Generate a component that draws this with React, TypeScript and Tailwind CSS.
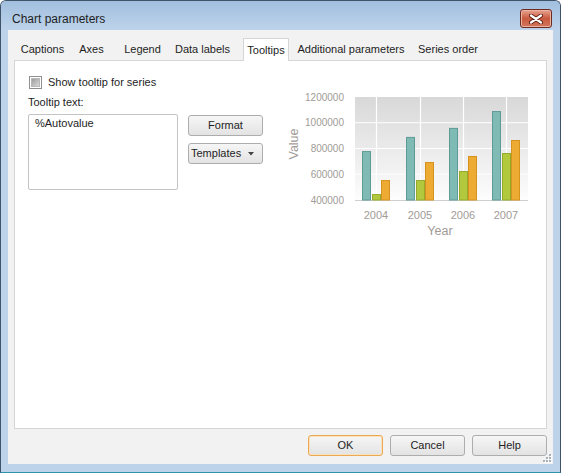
import React from 'react';

// --- chart data (values read off the picture) ---
const years = [
    { year: '2004', c: 96, v: [780000, 446000, 555000] },
    { year: '2005', c: 140, v: [890000, 555000, 695000] },
    { year: '2006', c: 183, v: [960000, 625000, 742000] },
    { year: '2007', c: 226, v: [1091000, 765000, 866000] },
];

const series = [
    { dx: -13.5, fill: '#80bab4', stroke: '#5f9b95' },
    { dx: -3.5, fill: '#b3c93d', stroke: '#93aa2c' },
    { dx: 5.5, fill: '#eeab34', stroke: '#d6921f' },
];

const yTicks = [1200000, 1000000, 800000, 600000, 400000];

const tabs = [
    { label: 'Captions', cls: 'w-[57px]' },
    { label: 'Axes', cls: 'w-[41px]' },
    { label: 'Legend', cls: 'w-[61px]' },
    { label: 'Data labels', cls: 'w-[59px]' },
    { label: 'Tooltips', cls: 'w-[46px] ml-[11px]', active: true },
    { label: 'Additional parameters', cls: 'w-[124px]' },
    { label: 'Series order', cls: 'w-[70px]' },
];

const PLOT_X = 75;
const PLOT_W = 173;
const PLOT_TOP = 21;
const PLOT_BOTTOM = 124;

const yOf = (v: number) => PLOT_BOTTOM - ((v - 400000) / 800000) * (PLOT_BOTTOM - PLOT_TOP);

function Chart() {
    return (
        <svg width="260" height="165" className="ml-[17px] shrink-0">
            <defs>
                <linearGradient id="plotBg" x1="0" y1="0" x2="0" y2="1">
                    <stop offset="0" stopColor="#d8d8d8" />
                    <stop offset="1" stopColor="#fdfdfd" />
                </linearGradient>
            </defs>
            <rect x={PLOT_X} y={PLOT_TOP} width={PLOT_W} height={PLOT_BOTTOM - PLOT_TOP} fill="url(#plotBg)" />
            {[1000000, 800000, 600000].map((v) => (
                <line key={v} x1={PLOT_X} x2={PLOT_X + PLOT_W} y1={yOf(v)} y2={yOf(v)} stroke="#ffffff" strokeWidth="1.2" />
            ))}
            {years.map((y) => (
                <line key={y.year} x1={y.c + 0.5} x2={y.c + 0.5} y1={PLOT_TOP} y2={PLOT_BOTTOM} stroke="#ffffff" strokeWidth="1.2" />
            ))}
            <line x1={PLOT_X} x2={PLOT_X + PLOT_W} y1={PLOT_BOTTOM + 0.5} y2={PLOT_BOTTOM + 0.5} stroke="#cfcfcf" />

            {years.map((y) =>
                series.map((s, i) => {
                    const top = yOf(y.v[i]);
                    return (
                        <rect
                            key={y.year + i}
                            x={y.c + s.dx}
                            y={top + 0.5}
                            width={8}
                            height={PLOT_BOTTOM - top - 0.5}
                            fill={s.fill}
                            stroke={s.stroke}
                            strokeWidth="1"
                        />
                    );
                })
            )}

            <g fontFamily="Liberation Sans, Arial, sans-serif" fill="#a19b97">
                {yTicks.map((v) => (
                    <text key={v} x={64} y={yOf(v) + 3.5} fontSize="10" textAnchor="end">
                        {v}
                    </text>
                ))}
                {years.map((y) => (
                    <text key={y.year} x={y.c} y={143} fontSize="11" textAnchor="middle">
                        {y.year}
                    </text>
                ))}
                <text x={160} y={159} fontSize="12.5" textAnchor="middle">Year</text>
                <text x={18} y={68} fontSize="12.5" textAnchor="middle" transform="rotate(-90 18 68)">Value</text>
            </g>
        </svg>
    );
}

function Button({ children, primary = false, className = '' }: { children: React.ReactNode; primary?: boolean; className?: string }) {
    return (
        <div
            className={
                'h-[21px] rounded-[3px] border bg-linear-to-b from-[#f6f6f6] to-[#e3e3e3] flex items-center text-[11px] leading-[13px] text-[#1e1e1e] ' +
                (primary ? 'border-[#eaa952] shadow-[inset_0_0_0_1px_#fbe2bd] ' : 'border-[#adadad] ') +
                className
            }
        >
            {children}
        </div>
    );
}

export default function App() {
    return (
        <div className="w-[561px] h-[473px] border border-[#3f5468] border-b-[#2f93ab] rounded-t-[6px] bg-[#bdd3ea] flex flex-col overflow-hidden font-['Liberation_Sans',Arial,sans-serif] text-[#1e1e1e]">
            {/* title bar */}
            <div className="h-[29px] shrink-0 bg-linear-to-b from-[#a2bfdf] to-[#bdd3ea] flex items-start justify-between pl-[11px] pr-[8px]">
                <span className="text-[12px] leading-[14px] mt-[11px]">Chart parameters</span>
                <div className="mt-[8px] w-[32px] h-[19px] rounded-[3px] border border-[#6d2a1f] bg-linear-to-b from-[#e7a391] via-[#c85a40] to-[#d1765b] shadow-[inset_0_0_0_1px_#eab2a3] flex items-center justify-center">
                    <svg width="14" height="10" viewBox="0 0 14 10">
                        <path d="M2 1.5 L12 8.5 M12 1.5 L2 8.5" stroke="#5a1c12" strokeWidth="4" strokeLinecap="round" />
                        <path d="M2 1.5 L12 8.5 M12 1.5 L2 8.5" stroke="#ffffff" strokeWidth="2.2" strokeLinecap="round" />
                    </svg>
                </div>
            </div>

            {/* client area */}
            <div className="relative flex-1 mx-[7px] mb-[8px] bg-[#f2f2f2] px-[6px] pt-[8px] text-[11px] leading-[13px]">
                {/* tab strip */}
                <div className="h-[22px] flex items-end">
                    {tabs.map((t) =>
                        t.active ? (
                            <div
                                key={t.label}
                                className={t.cls + ' relative z-10 -mb-px h-[23px] bg-white border border-b-0 border-[#d6d6d6] flex items-center justify-center'}
                            >
                                {t.label}
                            </div>
                        ) : (
                            <div key={t.label} className={t.cls + ' h-[22px] flex items-center justify-center'}>
                                {t.label}
                            </div>
                        )
                    )}
                </div>

                {/* tab page */}
                <div className="h-[369px] bg-white border border-[#d6d6d6] flex items-start pl-[13px] pt-[15px]">
                    <div className="w-[235px] shrink-0 flex flex-col">
                        <div className="flex items-center h-[13px]">
                            <div className="ml-px w-[13px] h-[13px] border border-[#8e8f8f] bg-white p-[1px]">
                                <div className="w-full h-full bg-linear-to-br from-[#9d9d9d] to-[#d9d9d9] border border-[#b8b8b8]" />
                            </div>
                            <span className="ml-[6px]">Show tooltip for series</span>
                        </div>
                        <div className="mt-[7px]">Tooltip text:</div>
                        <div className="mt-[5px] flex items-start">
                            <div className="w-[150px] h-[76px] bg-white border border-[#c4c4c4] rounded-[2px] pl-[6px] pt-[2px]">
                                %Autovalue
                            </div>
                            <div className="ml-[10px] mt-px flex flex-col gap-[7px]">
                                <Button className="w-[75px] justify-center">Format</Button>
                                <Button className="w-[75px] justify-between pl-[2px] pr-[8px]">
                                    <span>Templates</span>
                                    <svg width="6" height="4" viewBox="0 0 6 4">
                                        <polygon points="0,0 6,0 3,3.5" fill="#444" />
                                    </svg>
                                </Button>
                            </div>
                        </div>
                    </div>
                    <Chart />
                </div>

                {/* dialog buttons */}
                <div className="mt-[6px] flex justify-end gap-[7px]">
                    <Button primary className="w-[75px] justify-center">OK</Button>
                    <Button className="w-[75px] justify-center">Cancel</Button>
                    <Button className="w-[75px] justify-center">Help</Button>
                </div>

                {/* size grip */}
                <svg width="10" height="10" className="absolute right-[1px] bottom-[1px]">
                    {[
                        [7, 1], [4, 4], [7, 4], [1, 7], [4, 7], [7, 7],
                    ].map(([x, y]) => (
                        <g key={x + '-' + y}>
                            <rect x={x + 1} y={y + 1} width="2" height="2" fill="#ffffff" />
                            <rect x={x} y={y} width="2" height="2" fill="#a8b0b8" />
                        </g>
                    ))}
                </svg>
            </div>
        </div>
    );
}
